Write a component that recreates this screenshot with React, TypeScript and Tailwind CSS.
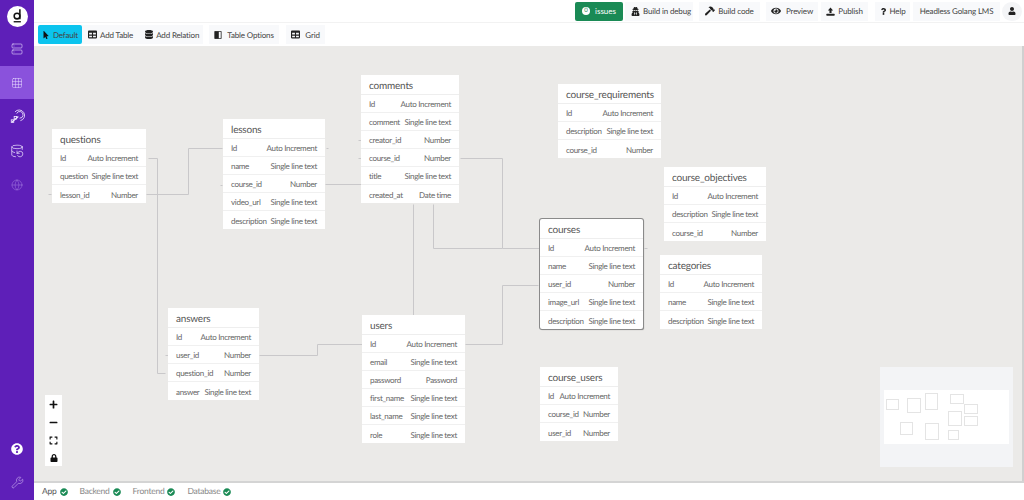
import type { ReactNode } from "react";
import {
  FaMousePointer,
  FaTable,
  FaDatabase,
  FaUserSecret,
  FaHammer,
  FaEye,
  FaQuestion,
  FaUser,
  FaQuestionCircle,
  FaCheckCircle,
  FaLock,
  FaPlus,
  FaMinus,
  FaExpand,
} from "react-icons/fa";
import { Server, Grid3x3, DatabaseBackup, Globe, Wrench } from "lucide-react";

type Row = [string, string];
interface TableData {
  name: string;
  x: number;
  y: number;
  w: number;
  rows: Row[];
  active?: boolean;
}

const AI = "Auto Increment";
const ST = "Single line text";
const NUM = "Number";

// canvas starts at x=34, y=46
const tables: TableData[] = [
  { name: "questions", x: 52, y: 129, w: 94, rows: [["Id", AI], ["question", ST], ["lesson_id", NUM]] },
  { name: "lessons", x: 223, y: 119, w: 102, rows: [["Id", AI], ["name", ST], ["course_id", NUM], ["video_url", ST], ["description", ST]] },
  { name: "comments", x: 361, y: 75, w: 98, rows: [["Id", AI], ["comment", ST], ["creator_id", NUM], ["course_id", NUM], ["title", ST], ["created_at", "Date time"]] },
  { name: "course_requirements", x: 558, y: 84, w: 103, rows: [["Id", AI], ["description", ST], ["course_id", NUM]] },
  { name: "course_objectives", x: 664, y: 167, w: 102, rows: [["Id", AI], ["description", ST], ["course_id", NUM]] },
  { name: "courses", x: 540, y: 219, w: 103, active: true, rows: [["Id", AI], ["name", ST], ["user_id", NUM], ["image_url", ST], ["description", ST]] },
  { name: "categories", x: 660, y: 255, w: 102, rows: [["Id", AI], ["name", ST], ["description", ST]] },
  { name: "answers", x: 168, y: 308, w: 91, rows: [["Id", AI], ["user_id", NUM], ["question_id", NUM], ["answer", ST]] },
  { name: "users", x: 362, y: 315, w: 103, rows: [["Id", AI], ["email", ST], ["password", "Password"], ["first_name", ST], ["last_name", ST], ["role", ST]] },
  { name: "course_users", x: 540, y: 367, w: 78, rows: [["Id", AI], ["course_id", NUM], ["user_id", NUM]] },
];

// relation lines in page coordinates
const lines = [
  "M148 158H157V373H165",
  "M146 194H188V148H222",
  "M48 194H51",
  "M326 148H328",
  "M220 185H222",
  "M325 184H361",
  "M358 140H361",
  "M358 158H361",
  "M460 158H502V248H540",
  "M433 204V248H502",
  "M413 204V315",
  "M259 355H317V344H362",
  "M465 344H502V285H538",
  "M644 248H647",
  "M165 355H168",
];

// minimap boxes: left, top, width, height relative to the minimap
const miniBoxes = [
  [6, 32, 13, 11],
  [27, 31, 14, 15],
  [45, 26, 13, 17],
  [70, 27, 14, 10],
  [84, 37, 14, 10],
  [68, 44, 14, 15],
  [84, 49, 14, 10],
  [20, 55, 13, 13],
  [45, 56, 14, 17],
  [68, 63, 11, 10],
];

const ErTable = ({ t }: { t: TableData }) => (
  <div
    className={`absolute bg-white ${t.active ? "rounded-[2px] shadow-[0_0_0_1px_#8a8a8a,1px_1px_1px_#8a8a8a]" : ""}`}
    style={{ left: t.x - 34, top: t.y - 46, width: t.w }}
  >
    <div className="h-5 pl-[8px] pt-[3px] flex items-center text-[10px] tracking-[-0.2px] text-[#555] border-b border-[#eee] whitespace-nowrap">
      {t.name}
    </div>
    {t.rows.map(([field, kind]) => (
      <div
        key={field}
        className="h-[18px] px-[8px] pt-[1px] flex items-center justify-between text-[8px] tracking-[-0.3px] text-[#666] border-b border-[#f0f0f0] last:border-b-0 whitespace-nowrap"
      >
        <span>{field}</span>
        <span>{kind}</span>
      </div>
    ))}
  </div>
);

const ToolButton = ({
  icon,
  label,
  className = "",
}: {
  icon: ReactNode;
  label: string;
  className?: string;
}) => (
  <div
    className={`h-[19px] flex items-center gap-[3px] text-[8px] tracking-[-0.15px] text-[#444] whitespace-nowrap ${className}`}
  >
    {icon}
    {label}
  </div>
);

const StatusItem = ({ label, dark }: { label: string; dark?: boolean }) => (
  <div className={`flex items-center gap-[3px] text-[8.5px] leading-none tracking-[-0.25px] ${dark ? "text-[#555]" : "text-[#888]"}`}>
    {label}
    <FaCheckCircle className="w-2 h-2 text-[#1a8a55]" />
  </div>
);

const PublishIcon = () => (
  <svg viewBox="0 0 12 12" className="w-[9px] h-[9px]" fill="#222">
    <path d="M6 0.5 9.5 4.5H7.4V8H4.6V4.5H2.5Z" />
    <rect x="0.5" y="9" width="11" height="2.5" rx="0.6" />
  </svg>
);

const Logo = () => (
  <svg viewBox="0 0 22 22" className="w-[21px] h-[21px]">
    <circle cx="11" cy="11" r="11" fill="#fff" />
    <circle cx="10.5" cy="10.5" r="3" fill="none" stroke="#111" strokeWidth="1.6" />
    <path d="M13.5 3.5V14" stroke="#111" strokeWidth="1.6" />
    <path d="M7 16.5H14.5" stroke="#111" strokeWidth="1.4" />
  </svg>
);

const RadarIcon = () => (
  <svg viewBox="0 0 18 18" className="w-[15px] h-[15px]" fill="none" stroke="#f0e8ff" strokeWidth="1">
    <path d="M6 3.5A6.5 6.5 0 1 1 12.5 14" />
    <path d="M8 5.5A4 4 0 1 1 11.5 11" />
    <path d="M10 9 2 16" strokeWidth="1.4" />
    <rect x="5" y="9" width="3" height="3" />
    <rect x="1.5" y="13" width="3" height="3" />
  </svg>
);

const TableOptionsIcon = () => (
  <svg viewBox="0 0 10 10" className="w-2 h-2" fill="#222">
    <path d="M1 0.5H9V9.5H1Z" fill="none" stroke="#222" />
    <rect x="1" y="0.5" width="5" height="9" />
  </svg>
);

export default function App() {
  return (
    <div className="flex h-[500px] w-[1024px] overflow-hidden bg-white font-['Lato','Noto_Sans',sans-serif] [text-rendering:geometricPrecision]">
      {/* Sidebar */}
      <aside className="w-[34px] flex-none bg-[#5e1fb8] flex flex-col items-center">
        <div className="h-[30px] mt-[1px] flex items-center justify-center">
          <Logo />
        </div>
        <div className="h-[35px] w-full flex items-center justify-center">
          <Server className="w-[12px] h-[12px] text-[#e8dcff]" strokeWidth={1.2} />
        </div>
        <div className="h-[33px] w-full bg-[#8a52dc] flex items-center justify-center">
          <Grid3x3 className="w-[12px] h-[12px] text-[#e8dcff]" strokeWidth={1} />
        </div>
        <div className="h-[34px] w-full flex items-center justify-center">
          <RadarIcon />
        </div>
        <div className="h-[35px] w-full flex items-center justify-center">
          <DatabaseBackup className="w-[14px] h-[14px] text-[#f0e8ff]" strokeWidth={1.2} />
        </div>
        <div className="h-[34px] w-full flex items-center justify-center">
          <Globe className="w-[12px] h-[12px] text-[#a67fe0]" strokeWidth={1} />
        </div>
        <div className="flex-1" />
        <div className="h-[35px] w-full flex items-center justify-center">
          <FaQuestionCircle className="w-3 h-3 text-white" />
        </div>
        <div className="h-[34px] pb-[1px] w-full flex items-center justify-center">
          <Wrench className="w-[13px] h-[13px] text-[#d9c6f5]" strokeWidth={1} />
        </div>
      </aside>

      <div className="flex-1 flex flex-col min-w-0">
        {/* Top bar */}
        <header className="h-[23px] flex-none flex items-center justify-end bg-white border-b border-[#f2f2f2] pr-[2px]">
          <div className="h-[19px] w-[48px] mr-[2px] rounded-[2px] bg-[#1a8a55] flex items-center justify-center gap-[5px] text-[8px] text-white">
            <span className="w-[8px] h-[8px] rounded-full bg-white text-[#1a8a55] text-[6px] leading-[8px] text-center">0</span>
            issues
          </div>
          <ToolButton className="w-[68px] mr-[6px] pl-[4px] justify-center bg-[#f8f9fb]" icon={<FaUserSecret className="w-[9px] h-[9px] text-[#222]" />} label="Build in debug" />
          <ToolButton className="w-[61px] mr-[6px] justify-center bg-[#f8f9fb]" icon={<FaHammer className="w-[10px] h-[10px] text-[#222]" />} label="Build code" />
          <ToolButton className="w-[52px] mr-[3px] justify-center gap-[5px] bg-[#f8f9fb]" icon={<FaEye className="w-[10px] h-[10px] text-[#222]" />} label="Preview" />
          <ToolButton className="w-[47px] mr-[7px] justify-center bg-[#f8f9fb]" icon={<PublishIcon />} label="Publish" />
          <ToolButton className="w-[35px] mr-[3px] justify-center bg-[#f8f9fb]" icon={<FaQuestion className="w-[7px] h-[7px] text-[#222]" />} label="Help" />
          <ToolButton className="w-[87px] mr-[2px] justify-center bg-[#f8f9fb]" icon={null} label="Headless Golang LMS" />
          <div className="w-[20px] h-[19px] rounded-full bg-[#f4f5f7] flex items-center justify-center">
            <FaUser className="w-2 h-2 text-[#222]" />
          </div>
        </header>

        {/* Toolbar */}
        <div className="h-[23px] flex-none flex items-center bg-white pl-[4px]">
          <ToolButton className="w-[44px] justify-center rounded-[2px] bg-[#0cc4ee] text-[#1b3a44]" icon={<FaMousePointer className="w-2 h-2 text-[#111]" />} label="Default" />
          <div className="h-[19px] w-[121px] bg-[#f8f9fb] flex items-center gap-[12px] pl-[6px]">
            <ToolButton icon={<FaTable className="w-[9px] h-[9px] text-[#222]" />} label="Add Table" />
            <ToolButton icon={<FaDatabase className="w-[8px] h-[9px] text-[#222]" />} label="Add Relation" />
          </div>
          <ToolButton className="w-[70px] ml-[6px] justify-center gap-[5px] bg-[#f8f9fb]" icon={<TableOptionsIcon />} label="Table Options" />
          <ToolButton className="w-[39px] ml-[7px] justify-center gap-[5px] bg-[#f8f9fb]" icon={<FaTable className="w-[9px] h-[9px] text-[#222]" />} label="Grid" />
        </div>

        {/* Canvas */}
        <main className="flex-1 relative bg-[#ebeae8] border-r-2 border-[#d0d0d0] overflow-hidden">
          <svg className="absolute inset-0 w-full h-full" fill="none" stroke="#c9c8ca" strokeWidth="1">
            <g transform="translate(-33.5 -45.5)">
              {lines.map((d) => (
                <path key={d} d={d} />
              ))}
            </g>
          </svg>

          {tables.map((t) => (
            <ErTable key={t.name} t={t} />
          ))}

          {/* Zoom controls */}
          <div className="absolute left-[11px] top-[349px] w-[17px] h-[71px] bg-white flex flex-col items-center text-[#111]">
            <div className="h-[18px] flex items-center"><FaPlus className="w-[9px] h-[9px]" /></div>
            <div className="h-[18px] flex items-center"><FaMinus className="w-[9px] h-[9px]" /></div>
            <div className="h-[18px] flex items-center"><FaExpand className="w-[9px] h-[9px]" /></div>
            <div className="h-[17px] flex items-center"><FaLock className="w-2 h-2" /></div>
          </div>

          {/* Minimap */}
          <div className="absolute left-[846px] top-[321px] w-[133px] h-[100px] bg-[#f3f4f6]">
            <div className="absolute left-[4px] top-[23px] w-[125px] h-[54px] bg-white" />
            {miniBoxes.map(([l, t, w, h]) => (
              <div
                key={`${l}-${t}`}
                className="absolute bg-white border border-[#e4e4e4]"
                style={{ left: l, top: t, width: w, height: h }}
              />
            ))}
          </div>
        </main>

        {/* Status bar */}
        <footer className="h-[19px] flex-none flex items-center gap-[12px] pl-[8px] bg-white border-t-2 border-[#d4d4d4]">
          <StatusItem label="App" dark />
          <StatusItem label="Backend" />
          <StatusItem label="Frontend" />
          <StatusItem label="Database" />
        </footer>
      </div>
    </div>
  );
}
